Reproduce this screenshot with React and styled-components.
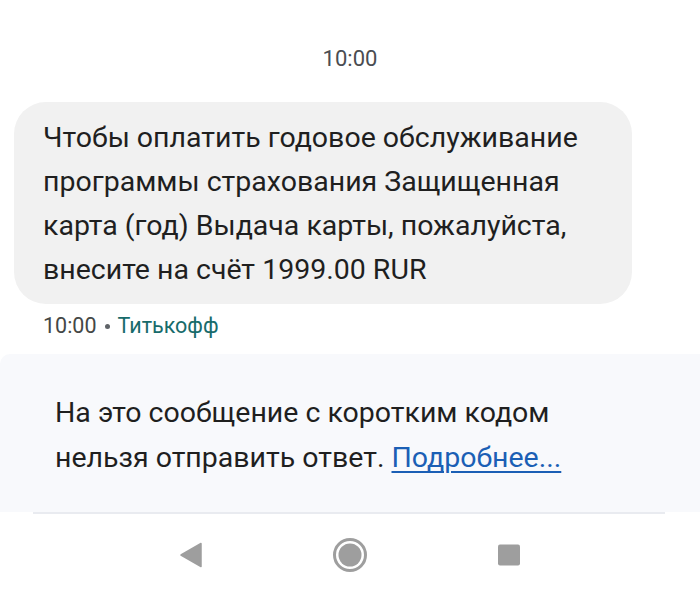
import styled, { createGlobalStyle } from "styled-components";

const GlobalStyle = createGlobalStyle`
  html, body {
    margin: 0;
    padding: 0;
    background: #ffffff;
  }
  body {
    font-family: Roboto, "Noto Sans", sans-serif;
    color: #1f1f1f;
  }
`;

const Screen = styled.div`
  width: 700px;
  height: 596px;
  display: flex;
  flex-direction: column;
  overflow: hidden;
  background: #fff;
`;

const Thread = styled.div`
  flex: 1;
  display: flex;
  flex-direction: column;
  padding-top: 45px;
`;

const Stamp = styled.div`
  text-align: center;
  font-size: 22px;
  line-height: 28px;
  color: #4a4d51;
`;

const Bubble = styled.div`
  align-self: flex-start;
  margin: 29px 0 0 14px;
  width: 618px;
  box-sizing: border-box;
  padding: 14px 20px 12px 29px;
  background: #f1f1f1;
  border-radius: 32px;
  font-size: 28.5px;
  line-height: 44px;
  color: #1f1f1f;
  white-space: nowrap;
`;

const Meta = styled.div`
  margin: 10px 0 0 43px;
  font-size: 21.5px;
  line-height: 24px;
  color: #444746;
  display: flex;
  align-items: center;
  gap: 8px;
`;

const Dot = styled.span`
  width: 5px;
  height: 5px;
  border-radius: 50%;
  background: #5f6368;
`;

const Sender = styled.span`
  color: #176b6b;
`;

const Notice = styled.div`
  margin-top: 16px;
  height: 158px;
  box-sizing: border-box;
  padding: 36px 0 0 55px;
  background: #f8f9fc;
  border-top-left-radius: 10px;
  font-size: 28.5px;
  line-height: 45px;
  color: #1f1f1f;
`;

const Link = styled.a`
  color: #1b5fb5;
  text-decoration: underline;
  text-underline-offset: 4px;
  text-decoration-thickness: 2px;
`;

const Divider = styled.div`
  height: 2px;
  margin: 0 35px 0 33px;
  background: #e9ebf0;
`;

const NavBar = styled.div`
  height: 82px;
  display: flex;
  align-items: center;
  justify-content: center;
`;

const NavSlot = styled.div`
  width: 159px;
  display: flex;
  justify-content: center;
  align-items: center;
`;

const NAV = "#9e9e9e";

export default function App() {
  return (
    <Screen>
      <GlobalStyle />
      <Thread>
        <Stamp>10:00</Stamp>
        <Bubble>
          Чтобы оплатить годовое обслуживание
          <br />
          программы страхования Защищенная
          <br />
          карта (год) Выдача карты, пожалуйста,
          <br />
          внесите на счёт 1999.00 RUR
        </Bubble>
        <Meta>
          10:00 <Dot /> <Sender>Титькофф</Sender>
        </Meta>
        <Notice>
          На это сообщение с коротким кодом
          <br />
          нельзя отправить ответ. <Link href="#">Подробнее...</Link>
        </Notice>
        <Divider />
      </Thread>
      <NavBar>
        <NavSlot>
          <svg width="24" height="26" viewBox="0 0 24 26">
            <path d="M22 1.5 L22 24.5 L2 13 Z" fill={NAV} stroke={NAV} strokeWidth="1.5" strokeLinejoin="round" />
          </svg>
        </NavSlot>
        <NavSlot>
          <svg width="36" height="36" viewBox="0 0 36 36">
            <circle cx="18" cy="18" r="15.5" fill="none" stroke={NAV} strokeWidth="3" />
            <circle cx="18" cy="18" r="11.5" fill={NAV} />
          </svg>
        </NavSlot>
        <NavSlot>
          <svg width="24" height="24" viewBox="0 0 24 24">
            <rect x="1" y="1.5" width="22" height="21" rx="2" fill={NAV} />
          </svg>
        </NavSlot>
      </NavBar>
    </Screen>
  );
}
